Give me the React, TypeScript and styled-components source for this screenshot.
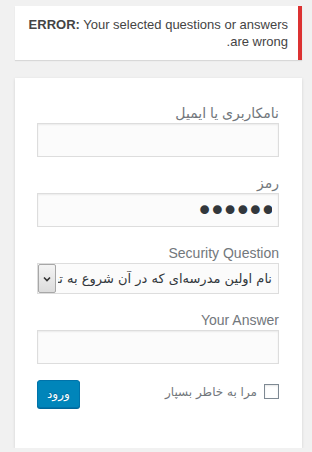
import React, { useState } from "react";
import styled, { createGlobalStyle } from "styled-components";

const GlobalStyle = createGlobalStyle`
  html, body {
    margin: 0;
    padding: 0;
    background: #f1f1f1;
  }
  body {
    direction: rtl;
    font-family: "Liberation Sans", "DejaVu Sans", sans-serif;
    color: #444;
    font-size: 13px;
  }
`;

const Page = styled.div`
  padding: 6px 10px 0 15px;
  width: 312px;
  box-sizing: border-box;
`;

const ErrorBox = styled.div`
  background: #fff;
  border-right: 4px solid #dc3232;
  box-shadow: 0 1px 1px 0 rgba(0, 0, 0, 0.1);
  padding: 10px 10px 10px 12px;
  line-height: 17px;
  font-size: 13px;
  color: #444;
  margin-bottom: 18px;
`;

const LoginForm = styled.form`
  background: #fff;
  box-shadow: 0 1px 3px rgba(0, 0, 0, 0.13);
  padding: 25px 23px 40px 22px;
`;

const Label = styled.label`
  display: block;
  font-size: 14px;
  line-height: 20px;
  color: #72777c;
`;

const Field = styled.input<{ $secret?: boolean }>`
  display: block;
  width: 100%;
  box-sizing: border-box;
  height: 34px;
  margin: 0 0 16px;
  padding: ${(p) => (p.$secret ? "0 6px 0 5px" : "3px 5px")};
  background: #fbfbfb;
  border: 1px solid #ddd;
  box-shadow: inset 0 1px 2px rgba(0, 0, 0, 0.07);
  font-family: ${(p) => (p.$secret ? '"DejaVu Sans", sans-serif' : '"Liberation Sans", "DejaVu Sans", sans-serif')};
  font-size: ${(p) => (p.$secret ? "30px" : "24px")};
  letter-spacing: ${(p) => (p.$secret ? "-5px" : "normal")};
  line-height: 32px;
  color: #32373c;
  outline: none;
`;

const SelectWrap = styled.div`
  position: relative;
  height: 31px;
  margin-bottom: 16px;
`;

const Select = styled.select`
  appearance: none;
  width: 100%;
  height: 31px;
  box-sizing: border-box;
  padding: 0 6px 0 20px;
  background: #fbfbfb;
  border: 1px solid #ddd;
  font-family: "DejaVu Sans", "Liberation Sans", sans-serif;
  font-size: 13px;
  color: #32373c;
  direction: rtl;
  outline: none;
`;

const Arrow = styled.span`
  position: absolute;
  left: 1px;
  top: 1px;
  width: 16px;
  height: 27px;
  border: 1px solid #a7a7a7;
  border-radius: 2px;
  background: linear-gradient(#f4f4f4, #dcdcdc);
  display: flex;
  align-items: center;
  justify-content: center;
  pointer-events: none;
`;

const BottomRow = styled.div`
  display: flex;
  justify-content: space-between;
  align-items: flex-start;
`;

const Remember = styled.label`
  display: flex;
  align-items: center;
  gap: 7px;
  font-size: 12px;
  color: #72777c;
  font-family: "DejaVu Sans", sans-serif;
  margin-top: 4px;
`;

const Check = styled.span`
  width: 13px;
  height: 13px;
  border: 1px solid #7e8993;
  background: #fff;
  box-shadow: inset 0 1px 2px rgba(0, 0, 0, 0.1);
`;

const Submit = styled.button`
  height: 28px;
  padding: 0 9px;
  background: #0085ba;
  border: 1px solid #0073aa;
  border-radius: 3px;
  box-shadow: 0 1px 0 #006799;
  color: #fff;
  font-family: "DejaVu Sans", sans-serif;
  font-size: 12px;
  text-shadow: 0 -1px 1px #006799;
  cursor: pointer;
`;

export default function App() {
  const [pass, setPass] = useState("123456");
  return (
    <Page>
      <GlobalStyle />
      <ErrorBox>
        <strong>ERROR:</strong> Your selected questions or answers are wrong.
      </ErrorBox>
      <LoginForm onSubmit={(e) => e.preventDefault()}>
        <Label>نامکاربری یا ایمیل</Label>
        <Field type="text" />
        <Label>رمز</Label>
        <Field $secret type="password" value={pass} onChange={(e) => setPass(e.target.value)} />
        <Label>Security Question</Label>
        <SelectWrap>
          <Select>
            <option>نام اولین مدرسه‌ای که در آن شروع به تحصیل کردید</option>
          </Select>
          <Arrow>
            <svg width="8" height="6" viewBox="0 0 8 6">
              <path d="M1 1.5 L4 4.5 L7 1.5" fill="none" stroke="#333" strokeWidth="1.6" />
            </svg>
          </Arrow>
        </SelectWrap>
        <Label>Your Answer</Label>
        <Field type="text" />
        <BottomRow>
          <Remember>
            <Check />
            مرا به خاطر بسپار
          </Remember>
          <Submit type="submit">ورود</Submit>
        </BottomRow>
      </LoginForm>
    </Page>
  );
}
